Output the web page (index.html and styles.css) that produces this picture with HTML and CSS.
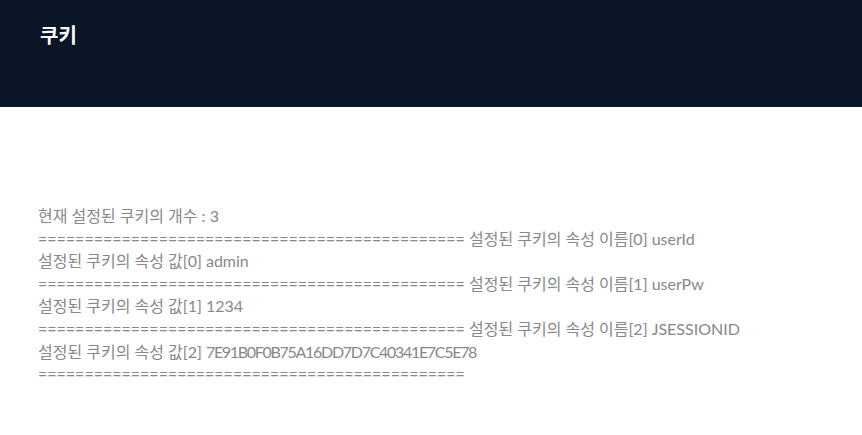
FILE: index.html
```html
<!DOCTYPE html>
<html lang="ko">
<head>
<meta charset="utf-8">
<title>쿠키</title>
<link rel="stylesheet" href="styles.css">
</head>
<body>
<header class="top">
  <h1 class="title">쿠키</h1>
</header>
<main class="content">
  <p class="output">현재 설정된 쿠키의 개수 : 3<br>============================================== 설정된 쿠키의 속성 이름[0] userId<br>설정된 쿠키의 속성 값[0] admin<br>============================================== 설정된 쿠키의 속성 이름[1] userPw<br>설정된 쿠키의 속성 값[1] 1234<br>============================================== 설정된 쿠키의 속성 이름[2] JSESSIONID<br>설정된 쿠키의 속성 값[2] <span class="hash">7E91B0F0B75A16DD7D7C40341E7C5E78</span><br>==============================================</p>
</main>
</body>
</html>
```
FILE: styles.css
```css
html, body {
  margin: 0;
  padding: 0;
  background: #ffffff;
}
body {
  font-family: "Lato", "Noto Sans CJK KR", sans-serif;
}
.top {
  background: #0a1628;
  height: 107px;
  padding: 21px 40px 0;
  box-sizing: border-box;
}
.title {
  margin: 0;
  color: #ffffff;
  font-family: "Noto Sans CJK KR", sans-serif;
  font-size: 20px;
  font-weight: 700;
  line-height: 28px;
}
.content {
  padding: 98px 38px 0;
}
.output {
  margin: 0;
  color: #888888;
  font-size: 16px;
  line-height: 22.6px;
}
.hash {
  letter-spacing: -1.3px;
}
```
